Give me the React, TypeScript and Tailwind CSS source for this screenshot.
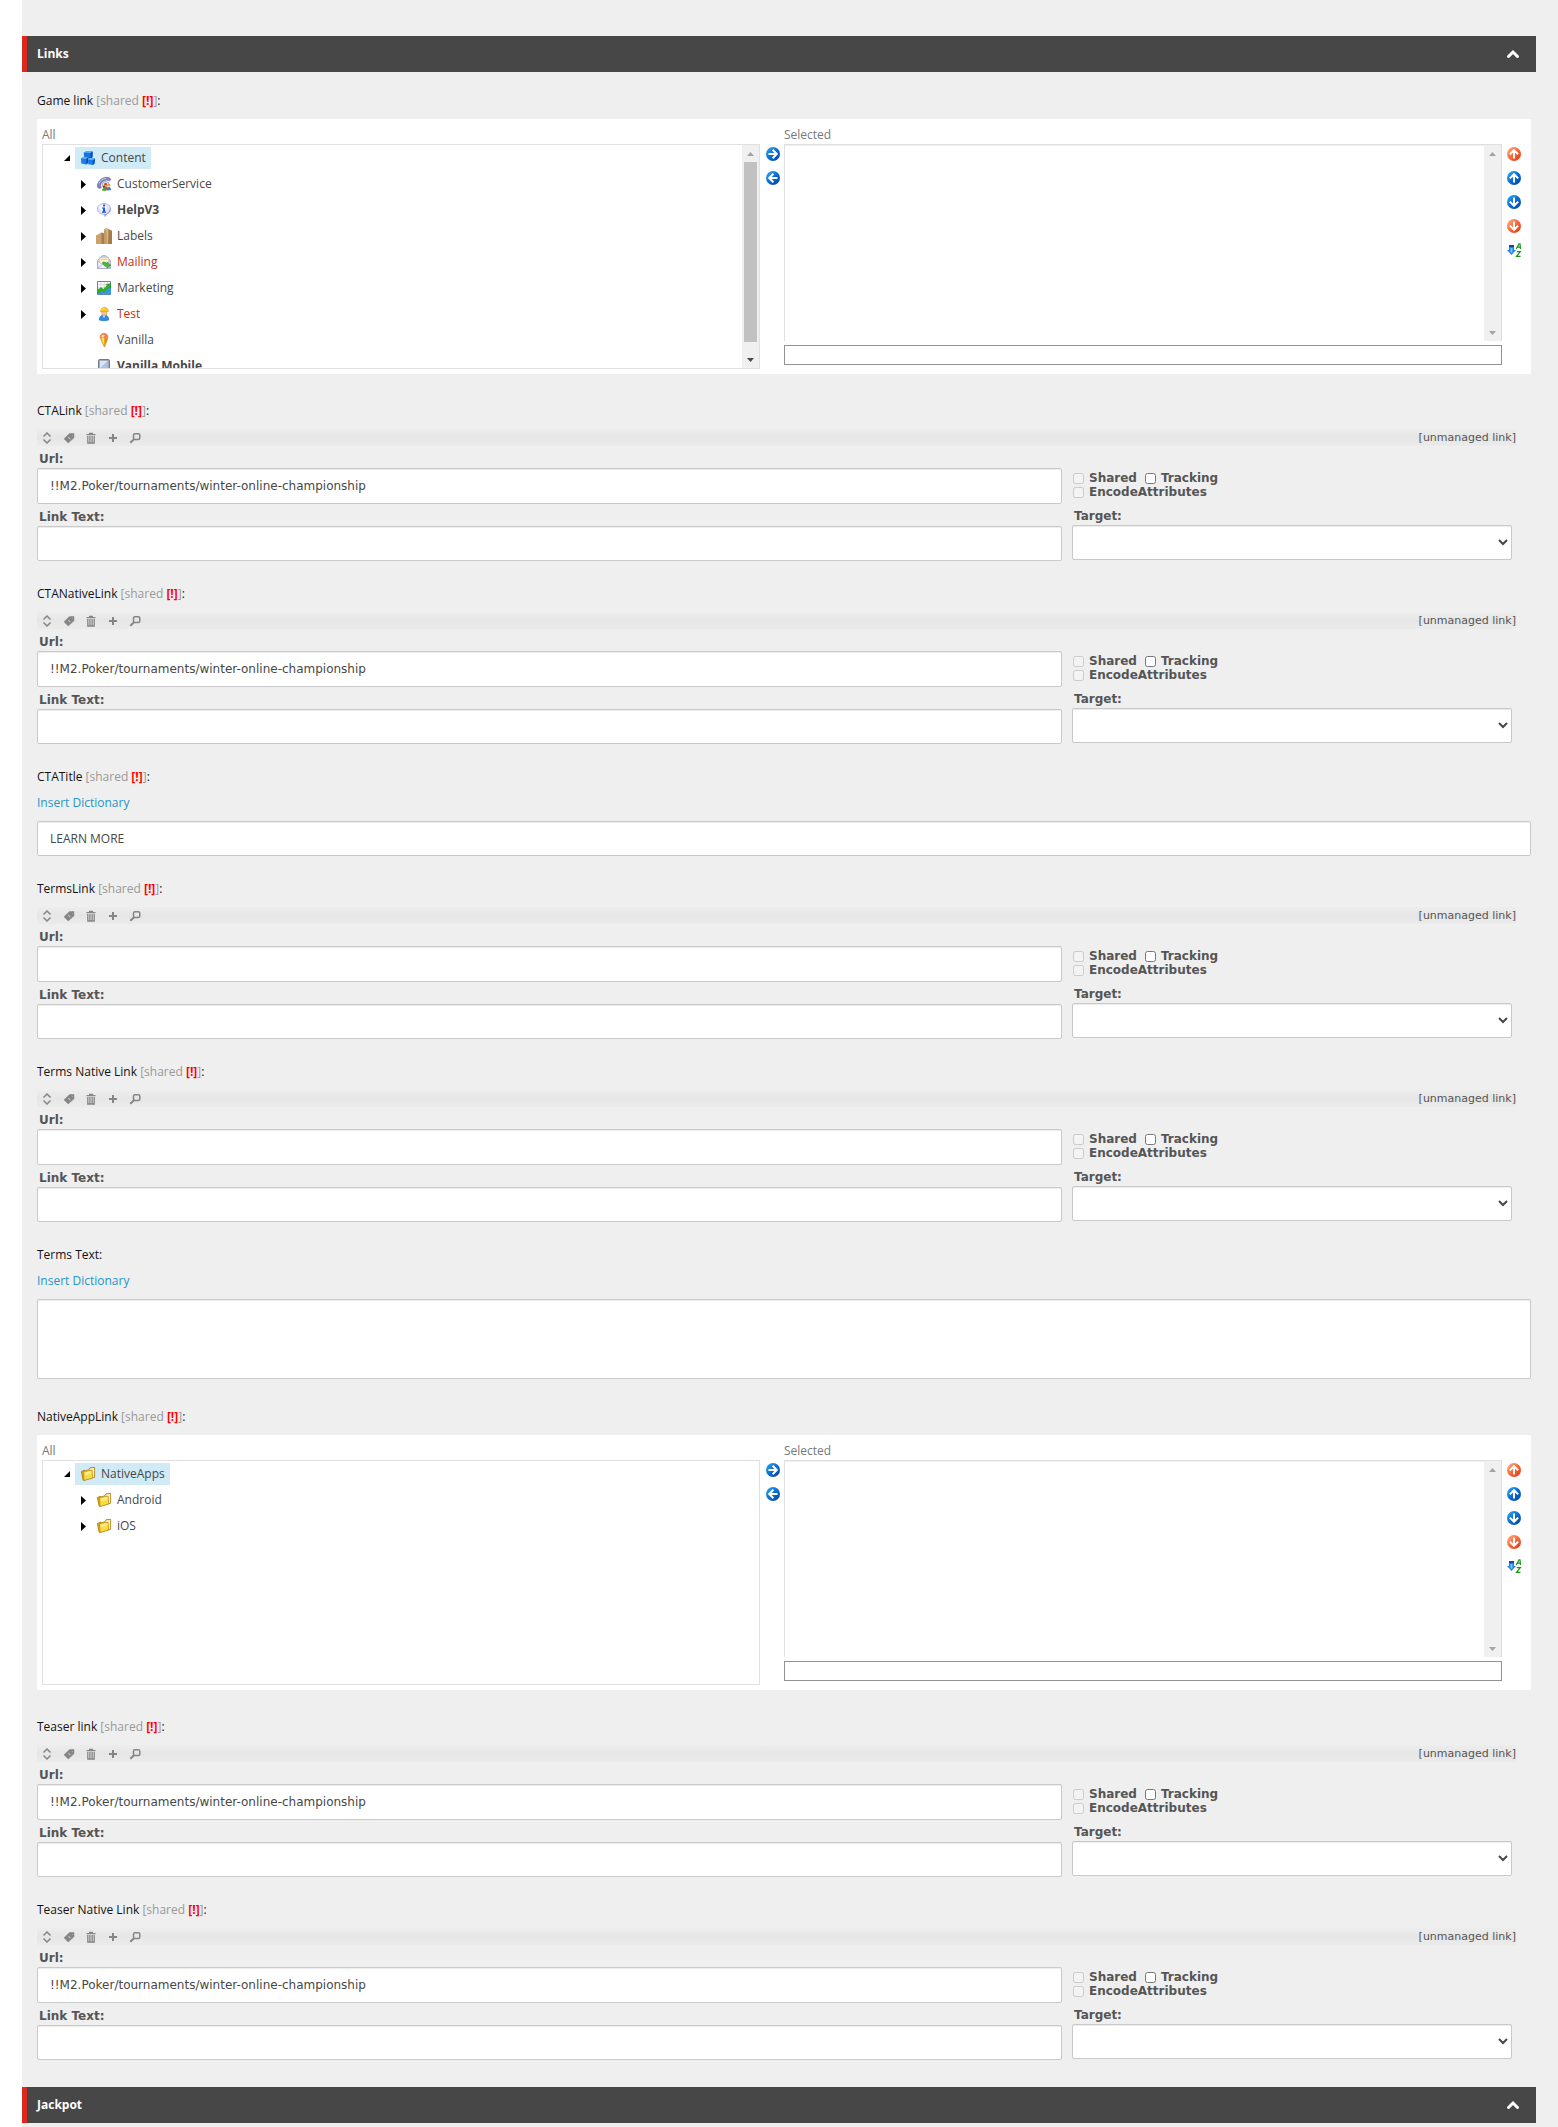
import React, { useId } from "react";

type IconName =
  | "cubes"
  | "phone"
  | "info"
  | "labels"
  | "mail"
  | "chart"
  | "worker"
  | "cone"
  | "mobile"
  | "folder";

type TreeNode = {
  name: string;
  icon: IconName;
  tone?: "bold" | "red";
  leaf?: boolean;
};

function TreeIcon({ name }: { name: IconName }) {
  const common = {
    viewBox: "0 0 14 14",
    className: "h-3.5 w-3.5 shrink-0 overflow-visible",
    "aria-hidden": true,
  } as const;
  switch (name) {
    case "cubes":
      return (
        <svg {...common}>
          <path d="M2.800 1.500 5.500.2l6.200.4-.3 5.800-2 1.300-6.300-.7z" fill="#1673e0" />
          <path d="M2.800 1.500 5.500.2l6.200.4-2 1.400z" fill="#5eb2fb" />
          <path d="M9.700 2l2-1.400-.3 5.800-2 1.300z" fill="#0a4aae" />
          <path d="M0 7.400 1.800 6l5.400.4-.2 5.600-1.600 1.400-5.100-.9z" fill="#1b7ce8" />
          <path d="M0 7.400 1.800 6l5.400.4-1.800 1.400z" fill="#6bbcff" />
          <path d="M5.400 7.800l1.800-1.400L7 12l-1.600 1.400z" fill="#0a4aae" />
          <path d="M7 8.400 8.800 6.900l5.200.6-.5 5-1.700 1.400-4.600-.7z" fill="#1b7ce8" />
          <path d="M7 8.400 8.800 6.900l5.200.6-1.800 1.400z" fill="#6bbcff" />
          <path d="M12.200 8.900l1.800-1.400-.5 5-1.700 1.400z" fill="#0a4aae" />
        </svg>
      );
    case "phone":
      return (
        <svg {...common}>
          <path d="M.6 10.200C-.6 6 4.200.2 9.600.3c2 0 4 .8 4 2.200 0 1-1 1.300-2 1.100L9.300 3C6 3.800 3.700 6 3.500 8.500l.8 1.700c.2.900-2.900 1.700-3.700 0z" fill="#8286c4" stroke="#54588f" strokeWidth=".6" />
          <path d="M2 6.500C3.200 3.500 6 1.600 9 1.500" stroke="#c9cbea" strokeWidth="1" fill="none" />
          <path d="M5 6.800 8 4l4 1.500-1 3.500-5 1z" fill="#dcdff2" stroke="#7377aa" strokeWidth=".5" />
          <circle cx="8.600" cy="7.300" r="1.500" fill="#c2571d" />
          <circle cx="12" cy="8.200" r="1.400" fill="#e8a33b" />
          <circle cx="7" cy="9.800" r="1.200" fill="#8c3d12" />
          <path d="M5 13.700c0-2 1-2.700 2.300-2.700s2.200.8 2.200 2.700z" fill="#3da72c" />
          <path d="M7.600 10.800c0-1.300 3-1.400 3.200.4v2H9.500z" fill="#e04a1c" />
          <path d="M10 13.300c0-2.500.8-3.300 2-3.300s1.900 1 1.900 3.300z" fill="#2d7bd2" />
        </svg>
      );
    case "info":
      return (
        <svg {...common}>
          <path d="M7 .5c3.800 0 6.600 2.300 6.600 5.400 0 2.500-1.600 4.300-3.600 5L8 13.500l-.6-2.200C3.300 11.400.4 9 .4 5.900.4 2.800 3.200.5 7 .5z" fill="#dfe2f8" stroke="#a7abd9" strokeWidth=".8" />
          <path d="M10 10.900 8 13.600l-.5-2.300C12 10.500 13 7 13 4c1.500 3.500 0 6-3 6.900z" fill="#8f94c8" />
          <ellipse cx="6.200" cy="4.600" rx="4" ry="3" fill="#f6f7ff" />
          <path d="M6.100 1.600h2v1.800h-2zM5 4.500h3v4h1v1.200H5V8.500h1V5.600H5z" fill="#1c5cd0" />
        </svg>
      );
    case "labels":
      return (
        <svg viewBox="0 0 16 16" className="-mx-px h-4 w-4 shrink-0" aria-hidden>
          <path d="M0 16V7.500L5.500 4.500 8 6v10z" fill="#c9a26f" />
          <path d="M5.500 4.500 8.500 5.200V16h-3z" fill="#a67d4c" />
          <path d="M8 16V1.500L10.500 0l5.500 3v13z" fill="#c49a68" />
          <path d="M12 .8 16 3v13h-4z" fill="#a87b4b" />
          <path d="M8 1.500 10.500 0l2 1L12 16h-1L10.500 2z" fill="#dab988" />
        </svg>
      );
    case "mail":
      return (
        <svg {...common}>
          <path d="M.5 5.500 5 .8h4l4.500 4.700v8H.5z" fill="#d9dbf3" stroke="#8d91c4" strokeWidth=".8" />
          <path d="M2.300 2.800h9.400v6H2.300z" fill="#fdf6cf" stroke="#b9b58e" strokeWidth=".5" />
          <path d="M3.500 4.500h7" stroke="#c9c6a4" strokeWidth=".7" />
          <path d="M.7 6 5.500 9.700.8 13.300zM13.300 6 8.500 9.700l4.700 3.600z" fill="#eceefb" stroke="#9a9ed0" strokeWidth=".5" />
          <path d="M.8 13.300 7 8.200l6.300 5.100z" fill="#f4f5fd" stroke="#9a9ed0" strokeWidth=".5" />
          <path d="M5.500 7.300c1.500-.6 3.500.2 4.500 1.400V7l3.800 3.200-3.800 3v-1.800c-2.500.3-4-1.500-4.500-4.100z" fill="#4fbb32" stroke="#247d12" strokeWidth=".5" />
        </svg>
      );
    case "chart":
      return (
        <svg {...common}>
          <path d="M.5.500h13v13H.5z" fill="#fff" stroke="#7d8088" />
          <path d="M4 1v8M7.200 1v8M10.400 1v8M1 3.700h12M1 6.400h12" stroke="#c3c5cc" strokeWidth=".6" />
          <path d="M.5 13.500V12L4 9.500 6 11l8-6.500v9z" fill="#3e95e6" />
          <path d="M1 8.500 4 6.600l2.400 1.600L10 4.600 9 3.400 13.500 2.500V7l-1.300-.8L7 11.400 4.700 10 1 12z" fill="#2fb31f" stroke="#1d7f13" strokeWidth=".4" />
        </svg>
      );
    case "worker":
      return (
        <svg {...common}>
          <path d="M2.200 13c0-3.500 2-5 4.900-5s4.700 1.500 4.700 5c-2 1-7.600 1-9.600 0z" fill="#2f8be6" stroke="#1c5fae" strokeWidth=".5" />
          <path d="M5.500 8.300 7 11l1.500-2.700z" fill="#d8ecff" />
          <circle cx="7.300" cy="6" r="2.700" fill="#f2c48c" stroke="#b9813c" strokeWidth=".4" />
          <path d="M3.600 4.800C3.400 2 5 .3 7.300.3S11.400 2 11.400 4.800l-1.600-.4H5.200z" fill="#ffc91f" stroke="#c98e06" strokeWidth=".5" />
          <path d="M5 2.800C5.500 1.700 6.300 1.200 7.500 1.200" stroke="#fff0a8" strokeWidth=".9" fill="none" />
        </svg>
      );
    case "cone":
      return (
        <svg {...common}>
          <path d="M3 4.500C3 2 4.800.3 7 .3S11 2 11 4.500L7.900 13.700h-.8z" fill="#eeb21d" stroke="#b67a0c" strokeWidth=".5" />
          <path d="M3 4.300C3.200 1.800 4.800.3 7 .3c2.200 0 3.800 1.500 4 3.500L8 5.400z" fill="#f0805a" />
          <path d="M4.300 3.600C5 1.700 6.500 1.500 7.500 2L6 5z" fill="#ffdccb" />
          <path d="M4.700 5.500 7 12V5z" fill="#ffe57a" />
          <path d="M8 5.500 7.700 12.500 10.400 5z" fill="#cf8b12" />
        </svg>
      );
    case "mobile":
      return (
        <svg {...common}>
          <rect x="1.500" y=".5" width="11" height="14" rx="1.200" fill="#a3abba" stroke="#666e7c" strokeWidth=".9" />
          <path d="M3 2h7.500v9H3z" fill="#aec3e2" />
          <path d="M3 2h7.500L3 9z" fill="#dbe6f5" />
        </svg>
      );
    default:
      return (
        <svg {...common}>
          <path d="M.4 4.500 3.600 3.200 4 12.500 2.200 13.400z" fill="#e0ab1c" stroke="#a87408" strokeWidth=".8" />
          <path d="M3.300 4.200 8 2.700l1-2 4.600-.3v9.800L4 13z" fill="#fff3b0" stroke="#a87408" strokeWidth=".8" />
          <path d="M2.500 4.600 11 3l.7 8-8.700 2.500z" fill="#fbdb3e" stroke="#b98510" strokeWidth=".7" />
          <path d="M3.500 5.400 10.200 4l.2 2.500L4 8.500z" fill="#fdec86" />
        </svg>
      );
  }
}

function ArrowBall({ dir, tone }: { dir: "up" | "down" | "left" | "right"; tone: "blue" | "orange" }) {
  const id = useId();
  const turn = { up: 0, right: 90, down: 180, left: 270 }[dir];
  const stops = tone === "blue" ? ["#39a8f5", "#0a6fd0", "#053f9b"] : ["#ffb28a", "#fb6a3a", "#d9320f"];
  return (
    <svg viewBox="0 0 14 14" className="h-3.5 w-3.5" aria-hidden>
      <defs>
        <linearGradient id={id} x1="0" y1="0" x2="1" y2="1">
          <stop offset="0" stopColor={stops[0]} />
          <stop offset=".5" stopColor={stops[1]} />
          <stop offset="1" stopColor={stops[2]} />
        </linearGradient>
      </defs>
      <circle cx="7" cy="7" r="7" fill={`url(#${id})`} />
      <path
        d="M7 11.500V3.500M2.800 7.400 7 3.200l4.200 4.200"
        stroke="#fff"
        strokeWidth="2"
        fill="none"
        transform={`rotate(${turn} 7 7)`}
      />
    </svg>
  );
}

function SortIcon() {
  return (
    <svg viewBox="0 0 14 14" className="h-3.5 w-3.5 overflow-visible" aria-hidden>
      <path d="M2 2h5v5h2L4.500 12 0 7h2z" fill="#1f83e6" />
      <path d="M2 2h5v2H2z" fill="#0b4aa8" />
      <path d="M3.500 5h2v4l-1 1-1-1z" fill="#7fc0ff" />
      <path d="M9.200 6 12 .8h1l.5 5.200M10.500 4.200h3" stroke="#169416" strokeWidth="1.200" fill="none" />
      <path d="M9.800 8.600h3.500L9.500 13.400h4" stroke="#169416" strokeWidth="1.200" fill="none" />
    </svg>
  );
}

function ScrollArrow({ down, dark }: { down?: boolean; dark?: boolean }) {
  return (
    <svg viewBox="0 0 7 4" className="h-1 w-[7px]" aria-hidden>
      <path d={down ? "M0 0h7L3.500 4z" : "M0 4h7L3.500 0z"} fill={dark ? "#474747" : "#a3a3a3"} />
    </svg>
  );
}

function Scrollbar({ active }: { active?: boolean }) {
  return (
    <div className="flex w-[17px] shrink-0 flex-col items-center bg-[#f0f0f0]">
      <div className="flex h-[17px] shrink-0 items-center">
        <ScrollArrow />
      </div>
      <div className="flex w-[13px] flex-1 flex-col">
        {active && <div className="h-[180px] bg-[#c1c1c1]" />}
      </div>
      <div className="flex h-[17px] shrink-0 items-center">
        <ScrollArrow down dark={active} />
      </div>
    </div>
  );
}

function Header({ title }: { title: string }) {
  return (
    <button
      type="button"
      className="flex h-9 w-full items-center justify-between border-l-5 border-[#dc291e] bg-[#474747] pr-[17px] pl-2.5 text-left text-[12px] font-bold text-white"
    >
      {title}
      <svg viewBox="0 0 12 8" className="h-2 w-3 overflow-visible" aria-hidden>
        <path d="M1.500 6.500 6 2l4.500 4.500" stroke="#fff" strokeWidth="3" strokeLinecap="round" fill="none" />
      </svg>
    </button>
  );
}

function FieldLabel({ name, shared = true, htmlFor }: { name: string; shared?: boolean; htmlFor?: string }) {
  return (
    <label htmlFor={htmlFor} className="mb-2.5 block leading-4 text-[#131313]">
      {name}
      {shared && (
        <>
          {" "}
          <span className="text-[#999]">
            [shared <span className="font-bold text-[#f00]">[!]</span>]
          </span>
        </>
      )}
      :
    </label>
  );
}

function TreeLabel({ node, selected }: { node: TreeNode; selected?: boolean }) {
  const tone =
    node.tone === "bold" ? "font-bold" : node.tone === "red" ? "text-[#c4300f]" : "";
  return (
    <span className={`flex h-[22px] items-center gap-1.5 px-1.5 ${selected ? "bg-[#d0ebf6] pr-[5px]" : ""} ${tone}`}>
      <TreeIcon name={node.icon} />
      <span className="whitespace-nowrap">{node.name}</span>
    </span>
  );
}

function TreePicker({ root, nodes, scroll }: { root: TreeNode; nodes: TreeNode[]; scroll?: boolean }) {
  const id = useId();
  return (
    <div className="flex h-[255px] bg-white p-[5px] pt-2 text-[#474747]">
      <div className="min-w-0 flex-1">
        <div className="h-[17px] leading-4 text-[#787878]">All</div>
        <div className="flex h-[225px] overflow-hidden border border-[#e0e0e0]">
          <ul className="min-w-0 flex-1 pl-5">
            <li>
              <div className="flex h-[26px] items-center">
                <button type="button" aria-label={`Collapse ${root.name}`} className="flex w-3 justify-end pr-[5px]">
                  <svg viewBox="0 0 6 6" className="h-1.5 w-1.5 shrink-0" aria-hidden>
                    <path d="M6 0v6H0z" fill="#000" />
                  </svg>
                </button>
                <TreeLabel node={root} selected />
              </div>
              <ul className="pl-[17px]">
                {nodes.map((node) => (
                  <li key={node.name} className="flex h-[26px] items-center">
                    {node.leaf ? (
                      <span className="w-[11px]" />
                    ) : (
                      <button type="button" aria-label={`Expand ${node.name}`} className="flex w-[11px] pl-px">
                        <svg viewBox="0 0 5 9" className="h-[9px] w-[5px] shrink-0" aria-hidden>
                          <path d="M0 0l5 4.500L0 9z" fill="#000" />
                        </svg>
                      </button>
                    )}
                    <TreeLabel node={node} />
                  </li>
                ))}
              </ul>
            </li>
          </ul>
          {scroll && <Scrollbar active />}
        </div>
      </div>
      <div className="flex w-6 flex-col items-end gap-2.5 pt-5 pr-1">
        <button type="button" aria-label="Add">
          <ArrowBall dir="right" tone="blue" />
        </button>
        <button type="button" aria-label="Remove">
          <ArrowBall dir="left" tone="blue" />
        </button>
      </div>
      <div className="min-w-0 flex-1">
        <label htmlFor={id} className="block h-[17px] leading-4 text-[#787878]">
          Selected
        </label>
        <div className="flex h-[197px] border border-b-0 border-[#e0e0e0]">
          <select
            id={id}
            multiple
            className="h-full min-w-0 flex-1 appearance-none overflow-hidden bg-white shadow-[inset_0_1px_0_#efefef] outline-none"
          />
          <Scrollbar />
        </div>
        <input aria-label="Item details" readOnly className="mt-1 block h-5 w-full border border-[#929292] px-1" />
      </div>
      <div className="flex w-6 flex-col items-center gap-2.5 pt-5">
        <button type="button" aria-label="Move to top">
          <ArrowBall dir="up" tone="orange" />
        </button>
        <button type="button" aria-label="Move up">
          <ArrowBall dir="up" tone="blue" />
        </button>
        <button type="button" aria-label="Move down">
          <ArrowBall dir="down" tone="blue" />
        </button>
        <button type="button" aria-label="Move to bottom">
          <ArrowBall dir="down" tone="orange" />
        </button>
        <button type="button" aria-label="Sort A to Z">
          <SortIcon />
        </button>
      </div>
    </div>
  );
}

const TOOLS: { label: string; art: React.ReactNode }[] = [
  {
    label: "Change",
    art: <path d="M2.500 4.500 6 1l3.500 3.500M2.500 7.500 6 11l3.500-3.500" stroke="#858585" strokeWidth="1.500" fill="none" />,
  },
  {
    label: "Tag",
    art: (
      <path
        d="M6.500 1.500H11v4.300L5.200 11 1 6.800zM9 3v1h1V3zM5 5.500l2 2 .7-.7-2-2z"
        fill="#858585"
        stroke="#858585"
        strokeWidth=".5"
        fillRule="evenodd"
      />
    ),
  },
  {
    label: "Delete",
    art: (
      <>
        <path d="M1.500 2.700h9M4 1.500h4" stroke="#858585" strokeWidth="1.300" />
        <path d="M2.800 4v7h6.400V4M4.900 4v6.500M7.100 4v6.500M2.800 10.800h6.400" stroke="#858585" strokeWidth="1.300" fill="none" />
      </>
    ),
  },
  { label: "Add", art: <path d="M6 2v8M2 6h8" stroke="#858585" strokeWidth="2" /> },
  {
    label: "Search",
    art: (
      <>
        <rect x="4.500" y="1.800" width="6.300" height="5.800" rx="1.500" stroke="#858585" strokeWidth="1.500" fill="none" />
        <path d="M5 7.300 1.300 10.700" stroke="#858585" strokeWidth="2" />
      </>
    ),
  },
];

const BOX =
  "block w-full rounded-xs border border-[#c9c9c9] bg-white text-[12px] text-[#474747] shadow-[inset_0_1px_1px_#00000013]";

function LinkField({ name, url = "" }: { name: string; url?: string }) {
  const id = useId();
  return (
    <section className="mb-[25px]">
      <FieldLabel name={name} />
      <div className="pr-[15px] font-['DejaVu_Sans',sans-serif] text-[#555]">
        <div className="flex h-[17px] items-center bg-linear-to-b from-[#ededed] via-[#e6e6e6] to-[#ebebeb] pl-1">
          <div className="flex flex-1 gap-2.5">
            {TOOLS.map((tool) => (
              <button key={tool.label} type="button" aria-label={tool.label}>
                <svg viewBox="0 0 12 12" className="h-3 w-3" aria-hidden>
                  {tool.art}
                </svg>
              </button>
            ))}
          </div>
          <span className="text-[11px] leading-4">[unmanaged link]</span>
        </div>
        <div className="mr-1 grid grid-cols-[1fr_440px] gap-x-2.5 text-[12px] font-bold">
          <div>
            <label htmlFor={`${id}url`} className="block h-[22px] pl-0.5 leading-[26px]">
              Url:
            </label>
            <input id={`${id}url`} defaultValue={url} className={`${BOX} h-9 px-3 font-normal`} />
            <label htmlFor={`${id}text`} className="block h-[22px] pl-0.5 leading-[26px]">
              Link Text:
            </label>
            <input id={`${id}text`} className={`${BOX} h-[35px] px-3 font-normal`} />
          </div>
          <div>
            <div className="h-[57px] pt-[25px] pl-px leading-3.5">
              <div className="flex gap-2">
                <label className="flex items-center gap-[5px]">
                  <input type="checkbox" disabled className="h-[11px] w-[11px]" />
                  Shared
                </label>
                <label className="flex items-center gap-[5px]">
                  <input type="checkbox" className="h-[11px] w-[11px]" />
                  Tracking
                </label>
              </div>
              <label className="flex items-center gap-[5px]">
                <input type="checkbox" disabled className="h-[11px] w-[11px]" />
                EncodeAttributes
              </label>
            </div>
            <label htmlFor={`${id}target`} className="block h-[22px] pl-0.5 leading-[26px]">
              Target:
            </label>
            <select id={`${id}target`} className={`${BOX} h-[35px] font-normal`} />
          </div>
        </div>
      </div>
    </section>
  );
}

function DictionaryLink() {
  return (
    <a href="#dictionary" className="mb-2.5 block w-fit leading-4 text-[#2694c8]">
      Insert Dictionary
    </a>
  );
}

const CONTENT: TreeNode[] = [
  { name: "CustomerService", icon: "phone" },
  { name: "HelpV3", icon: "info", tone: "bold" },
  { name: "Labels", icon: "labels" },
  { name: "Mailing", icon: "mail", tone: "red" },
  { name: "Marketing", icon: "chart" },
  { name: "Test", icon: "worker", tone: "red" },
  { name: "Vanilla", icon: "cone", leaf: true },
  { name: "Vanilla Mobile", icon: "mobile", tone: "bold", leaf: true },
];

const APPS: TreeNode[] = [
  { name: "Android", icon: "folder" },
  { name: "iOS", icon: "folder" },
];

const CHAMPIONSHIP = "!!M2.Poker/tournaments/winter-online-championship";

export default function App() {
  return (
    <div className="bg-white pl-[22px] font-['Open_Sans',sans-serif] text-[12px]">
      <main className="min-h-screen bg-[#efefef] pt-9 pr-[22px] pb-1">
        <Header title="Links" />
        <div className="pt-[21px] pr-[5px] pb-0.5 pl-[15px]">
          <section className="mb-[29px]">
            <FieldLabel name="Game link" />
            <TreePicker root={{ name: "Content", icon: "cubes" }} nodes={CONTENT} scroll />
          </section>
          <LinkField name="CTALink" url={CHAMPIONSHIP} />
          <LinkField name="CTANativeLink" url={CHAMPIONSHIP} />
          <section className="mb-[25px]">
            <FieldLabel name="CTATitle" htmlFor="cta-title" />
            <DictionaryLink />
            <input id="cta-title" defaultValue="LEARN MORE" className={`${BOX} h-[35px] px-3`} />
          </section>
          <LinkField name="TermsLink" />
          <LinkField name="Terms Native Link" />
          <section className="mb-[30px]">
            <FieldLabel name="Terms Text" shared={false} htmlFor="terms-text" />
            <DictionaryLink />
            <textarea id="terms-text" className={`${BOX} h-20 resize-none px-3 py-2`} />
          </section>
          <section className="mb-[29px]">
            <FieldLabel name="NativeAppLink" />
            <TreePicker root={{ name: "NativeApps", icon: "folder" }} nodes={APPS} />
          </section>
          <LinkField name="Teaser link" url={CHAMPIONSHIP} />
          <LinkField name="Teaser Native Link" url={CHAMPIONSHIP} />
        </div>
        <Header title="Jackpot" />
      </main>
    </div>
  );
}
